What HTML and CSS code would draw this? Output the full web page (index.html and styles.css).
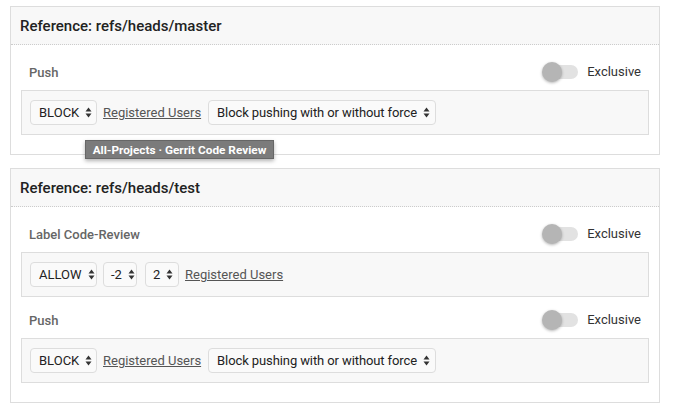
FILE: index.html
```html
<!DOCTYPE html>
<html>
<head>
<meta charset="utf-8">
<link rel="stylesheet" href="styles.css">
</head>
<body>
<div class="page">
  <section class="card">
    <div class="card-head">Reference: refs/heads/master</div>
    <div class="card-body">
      <div class="perm">
        <div class="perm-head">
          <span class="perm-name">Push</span>
          <span class="toggle"><span class="track"><span class="knob"></span></span><span class="toggle-label">Exclusive</span></span>
        </div>
        <div class="rule">
          <span class="sel w-action">BLOCK<svg class="arr" width="7" height="11" viewBox="0 0 7 11"><path d="M0.5 4.5L3.5 0.5L6.5 4.5Z M0.5 6.5L6.5 6.5L3.5 10.5Z"/></svg></span>
          <a class="group">Registered Users</a>
          <span class="sel w-force">Block pushing with or without force<svg class="arr" width="7" height="11" viewBox="0 0 7 11"><path d="M0.5 4.5L3.5 0.5L6.5 4.5Z M0.5 6.5L6.5 6.5L3.5 10.5Z"/></svg></span>
        </div>
      </div>
    </div>
    <div class="tooltip">All-Projects · Gerrit Code Review</div>
  </section>

  <section class="card">
    <div class="card-head">Reference: refs/heads/test</div>
    <div class="card-body">
      <div class="perm">
        <div class="perm-head">
          <span class="perm-name">Label Code-Review</span>
          <span class="toggle"><span class="track"><span class="knob"></span></span><span class="toggle-label">Exclusive</span></span>
        </div>
        <div class="rule">
          <span class="sel w-action">ALLOW<svg class="arr" width="7" height="11" viewBox="0 0 7 11"><path d="M0.5 4.5L3.5 0.5L6.5 4.5Z M0.5 6.5L6.5 6.5L3.5 10.5Z"/></svg></span>
          <span class="sel w-num">-2<svg class="arr" width="7" height="11" viewBox="0 0 7 11"><path d="M0.5 4.5L3.5 0.5L6.5 4.5Z M0.5 6.5L6.5 6.5L3.5 10.5Z"/></svg></span>
          <span class="sel w-num gap-l">2<svg class="arr" width="7" height="11" viewBox="0 0 7 11"><path d="M0.5 4.5L3.5 0.5L6.5 4.5Z M0.5 6.5L6.5 6.5L3.5 10.5Z"/></svg></span>
          <a class="group">Registered Users</a>
        </div>
      </div>
      <div class="perm">
        <div class="perm-head">
          <span class="perm-name">Push</span>
          <span class="toggle"><span class="track"><span class="knob"></span></span><span class="toggle-label">Exclusive</span></span>
        </div>
        <div class="rule">
          <span class="sel w-action">BLOCK<svg class="arr" width="7" height="11" viewBox="0 0 7 11"><path d="M0.5 4.5L3.5 0.5L6.5 4.5Z M0.5 6.5L6.5 6.5L3.5 10.5Z"/></svg></span>
          <a class="group">Registered Users</a>
          <span class="sel w-force">Block pushing with or without force<svg class="arr" width="7" height="11" viewBox="0 0 7 11"><path d="M0.5 4.5L3.5 0.5L6.5 4.5Z M0.5 6.5L6.5 6.5L3.5 10.5Z"/></svg></span>
        </div>
      </div>
    </div>
  </section>
</div>
</body>
</html>
```

FILE: styles.css
```css
html, body {
  margin: 0;
  padding: 0;
  background: #fff;
}
body {
  font-family: Roboto, "Liberation Sans", sans-serif;
  font-size: 13px;
  color: #333;
}
.page {
  padding: 6px 0 0 10px;
}
.card {
  position: relative;
  width: 648px;
  border: 1px solid #ddd;
  margin-bottom: 13px;
  background: #fff;
}
.card-head {
  height: 37px;
  display: flex;
  align-items: center;
  padding-left: 9px;
  background: #f8f8f8;
  border-bottom: 1px dotted #ccc;
  font-size: 15px;
  font-weight: 500;
  color: #222;
}
.card-body {
  padding: 17px 10px 19px 10px;
  display: flex;
  flex-direction: column;
  gap: 13px;
}
.perm-head {
  height: 20px;
  display: flex;
  align-items: center;
  justify-content: space-between;
  padding: 0 8px 0 8px;
  margin-bottom: 8px;
}
.perm-name {
  font-size: 13px;
  font-weight: 500;
  color: #666;
}
.toggle {
  display: flex;
  align-items: center;
  gap: 9px;
}
.track {
  position: relative;
  width: 34px;
  height: 14px;
  border-radius: 7px;
  background: #e2e2e2;
  display: block;
}
.knob {
  position: absolute;
  left: -2px;
  top: -3px;
  width: 20px;
  height: 20px;
  border-radius: 50%;
  background: #b5b5b5;
  box-shadow: 0 1px 3px rgba(0,0,0,0.3);
}
.toggle-label {
  font-size: 13px;
  color: #333;
  margin-top: -2px;
}
.rule {
  display: flex;
  align-items: center;
  height: 25px;
  padding: 9px 8px;
  border: 1px solid #ddd;
  background: #f8f8f8;
}
.sel {
  display: inline-flex;
  align-items: center;
  justify-content: space-between;
  box-sizing: border-box;
  height: 25px;
  padding: 0 5px 0 8px;
  border: 1px solid #ddd;
  border-radius: 4px;
  background: #fafafa;
  font-size: 13px;
  color: #222;
  gap: 6px;
  white-space: nowrap;
}
.w-action { width: 67px; }
.w-force { width: 228px; letter-spacing: -0.1px; }
.w-num { width: 34px; padding-left: 7px; }
.sel + .sel { margin-left: 6px; }
.sel.gap-l { margin-left: 8px; }
.arr {
  fill: #333;
  flex: none;
}
.group {
  margin: 0 7px 0 6px;
  color: #555;
  text-decoration: underline;
  font-size: 13px;
}
.tooltip {
  position: absolute;
  left: 74px;
  top: 133px;
  box-sizing: border-box;
  width: 189px;
  height: 19px;
  display: flex;
  align-items: center;
  justify-content: center;
  background: #7b7b7b;
  border: 1px solid #666;
  color: #fff;
  font-size: 11.8px;
  font-weight: 700;
  box-shadow: 0 2px 4px rgba(0,0,0,0.3);
}
```
